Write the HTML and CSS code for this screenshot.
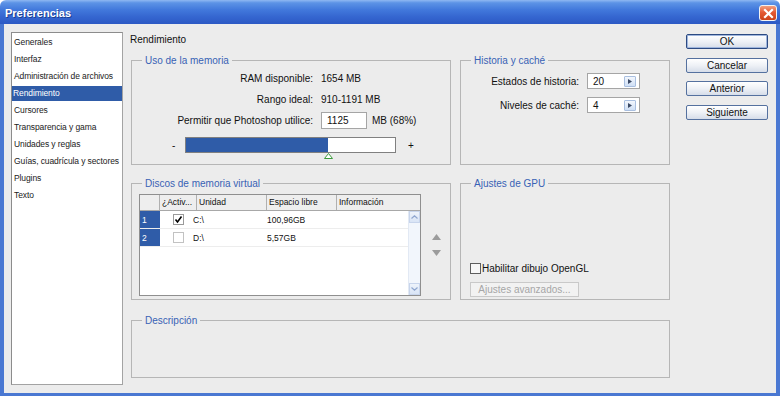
FILE: index.html
```html
<!DOCTYPE html>
<html lang="es">
<head>
    <meta charset="UTF-8">
    <title>Preferencias</title>
    <link rel="stylesheet" href="styles.css">
</head>
<body>
<div class="window">
    <div class="titlebar">
        <span class="title">Preferencias</span>
        <span class="close-btn">
            <svg width="11" height="11" viewBox="0 0 11 11"><path d="M2 2 L9 9 M9 2 L2 9" stroke="#fff" stroke-width="2.2" stroke-linecap="square"/></svg>
        </span>
    </div>

    <div class="dialog">
        <ul class="nav">
            <li>Generales</li>
            <li>Interfaz</li>
            <li>Administración de archivos</li>
            <li class="active">Rendimiento</li>
            <li>Cursores</li>
            <li>Transparencia y gama</li>
            <li>Unidades y reglas</li>
            <li>Guías, cuadrícula y sectores</li>
            <li>Plugins</li>
            <li>Texto</li>
        </ul>

        <div class="main">
            <div class="page-title">Rendimiento</div>

            <div class="row row-top">
                <fieldset class="group group-left">
                    <legend>Uso de la memoria</legend>
                    <div class="mem-grid">
                        <span class="lbl">RAM disponible:</span>
                        <span>1654 MB</span>
                        <span class="lbl">Rango ideal:</span>
                        <span>910-1191 MB</span>
                        <span class="lbl">Permitir que Photoshop utilice:</span>
                        <span class="inline">
                            <span class="field mem-field">1125</span>
                            <span>MB (68%)</span>
                        </span>
                    </div>
                    <div class="slider-row">
                        <span class="minus">-</span>
                        <div class="track">
                            <div class="fill" style="width: 142px"></div>
                            <svg class="thumb" width="9" height="6" viewBox="0 0 9 6"><polygon points="4.5,0.5 8.5,5.5 0.5,5.5" fill="#fff" stroke="#3c9a3c"/></svg>
                        </div>
                        <span class="plus">+</span>
                    </div>
                </fieldset>

                <fieldset class="group group-right">
                    <legend>Historia y caché</legend>
                    <div class="hist-grid">
                        <span class="lbl">Estados de historia:</span>
                        <span class="field spin">20<span class="spin-btn"><svg width="4" height="5" viewBox="0 0 4 5"><polygon points="0,0 4,2.5 0,5" fill="#3b4a66"/></svg></span></span>
                        <span class="lbl">Niveles de caché:</span>
                        <span class="field spin">4<span class="spin-btn"><svg width="4" height="5" viewBox="0 0 4 5"><polygon points="0,0 4,2.5 0,5" fill="#3b4a66"/></svg></span></span>
                    </div>
                </fieldset>
            </div>

            <div class="row row-mid">
                <fieldset class="group group-left">
                    <legend>Discos de memoria virtual</legend>
                    <div class="disks">
                        <div class="table">
                            <div class="thead">
                                <span class="th th-num"></span>
                                <span class="th th-act">¿Activ...</span>
                                <span class="th th-unit">Unidad</span>
                                <span class="th th-free">Espacio libre</span>
                                <span class="th th-info">Información</span>
                            </div>
                            <div class="tbody">
                                <div class="rows">
                                    <div class="tr">
                                        <span class="num">1</span>
                                        <span class="act"><span class="check checked"><svg width="9" height="9" viewBox="0 0 9 9"><path d="M1.5 4.5 L3.5 7 L7.5 1.5" fill="none" stroke="#000" stroke-width="1.6"/></svg></span></span>
                                        <span>C:\</span>
                                        <span class="free">100,96GB</span>
                                    </div>
                                    <div class="tr">
                                        <span class="num">2</span>
                                        <span class="act"><span class="check"></span></span>
                                        <span>D:\</span>
                                        <span class="free">5,57GB</span>
                                    </div>
                                </div>
                                <div class="scrollbar">
                                    <span class="sb-btn"><svg width="7" height="4" viewBox="0 0 7 4"><path d="M0.5 3.5 L3.5 0.8 L6.5 3.5" fill="none" stroke="#8fa6cf" stroke-width="1.2"/></svg></span>
                                    <span class="sb-btn"><svg width="7" height="4" viewBox="0 0 7 4"><path d="M0.5 0.5 L3.5 3.2 L6.5 0.5" fill="none" stroke="#8fa6cf" stroke-width="1.2"/></svg></span>
                                </div>
                            </div>
                        </div>
                        <div class="order">
                            <svg width="9" height="6" viewBox="0 0 9 6"><polygon points="4.5,0 9,6 0,6" fill="#9b9b9b"/></svg>
                            <svg width="9" height="6" viewBox="0 0 9 6"><polygon points="0,0 9,0 4.5,6" fill="#9b9b9b"/></svg>
                        </div>
                    </div>
                </fieldset>

                <fieldset class="group group-right">
                    <legend>Ajustes de GPU</legend>
                    <div class="gpu">
                        <label class="gpu-check"><span class="check dark"></span>Habilitar dibujo OpenGL</label>
                        <span class="btn-disabled">Ajustes avanzados...</span>
                    </div>
                </fieldset>
            </div>

            <fieldset class="group desc">
                <legend>Descripción</legend>
            </fieldset>
        </div>

        <div class="buttons">
            <span class="btn default">OK</span>
            <span class="btn">Cancelar</span>
            <span class="btn">Anterior</span>
            <span class="btn">Siguiente</span>
        </div>
    </div>
</div>
</body>
</html>
```

FILE: styles.css
```css
* {
    margin: 0;
    padding: 0;
    box-sizing: border-box;
}

html, body {
    width: 780px;
    height: 396px;
    overflow: hidden;
    background: #fff;
}

body {
    font-family: "Liberation Sans", Arial, sans-serif;
    font-size: 10px;
    color: #111;
}

.window {
    height: 396px;
    display: flex;
    flex-direction: column;
}

/* title bar */
.titlebar {
    height: 24px;
    display: flex;
    align-items: center;
    justify-content: space-between;
    padding: 0 3px 0 5px;
    border-radius: 6px 6px 0 0;
    background: linear-gradient(#8fb8f2 0%, #5c93e6 12%, #4279dc 40%, #3566d0 70%, #2c59c4 100%);
}

.title {
    margin-top: 2px;
    color: #fff;
    font-size: 11px;
    font-weight: bold;
    text-shadow: 1px 1px 0 #1b3f92;
}

.close-btn {
    width: 18px;
    height: 16px;
    margin-top: 2px;
    border: 1px solid #f3f3f3;
    border-radius: 3px;
    background: linear-gradient(#f0a080, #e55a34 45%, #cc4218);
    display: flex;
    align-items: center;
    justify-content: center;
}

/* dialog body */
.dialog {
    flex: 1;
    display: flex;
    background: #ececec;
    border: 4px solid #4a78d2;
    border-top: 0;
    border-bottom-width: 3px;
    padding: 8px 8px 8px 7px;
}

.nav {
    width: 112px;
    list-style: none;
    background: #fff;
    border: 1px solid #a3a3a3;
    border-top-color: #8c8c8c;
    border-left-color: #8c8c8c;
    padding-top: 2px;
    font-size: 8.5px;
    letter-spacing: -0.1px;
    color: #222;
}

.nav li {
    height: 15px;
    line-height: 15px;
    margin-bottom: 2px;
    padding-left: 2px;
    white-space: nowrap;
}

.nav li.active {
    background: #2f5ca8;
    color: #fff;
    padding-left: 1px;
}

.main {
    width: 539px;
    margin-left: 8px;
}

.page-title {
    line-height: 13px;
    margin: 1px 0 0 -1px;
}

.row {
    display: flex;
    gap: 9px;
}

.row-top {
    height: 111px;
    margin-top: 8px;
}

.row-mid {
    height: 123px;
    margin-top: 12px;
}

.group {
    border: 1px solid #b6b6b6;
    min-width: 0;
}

.group legend {
    margin-left: 10px;
    padding: 0 3px;
    line-height: 13px;
    color: #3862b5;
}

.group-left {
    width: 320px;
}

.group-right {
    width: 210px;
}

.desc {
    height: 64px;
    margin-top: 14px;
}

/* memory */
.mem-grid {
    display: grid;
    grid-template-columns: 181px auto;
    grid-template-rows: 20px 20px 21px;
    row-gap: 1px;
    column-gap: 8px;
    align-items: center;
    padding-top: 1px;
}

.lbl {
    text-align: right;
    white-space: nowrap;
}

.inline {
    display: flex;
    align-items: center;
    gap: 5px;
}

.field {
    display: inline-flex;
    align-items: center;
    background: #fff;
    border: 1px solid #a5a5a5;
    padding-left: 5px;
}

.mem-field {
    width: 46px;
    height: 17px;
}

.slider-row {
    display: flex;
    align-items: center;
    margin-top: 6px;
    padding-left: 40px;
}

.minus {
    width: 13px;
}

.plus {
    padding-left: 12px;
}

.track {
    position: relative;
    width: 211px;
    height: 16px;
    border: 1px solid #808080;
    background: #fff;
}

.fill {
    height: 100%;
    background: #2f5ca8;
}

.thumb {
    position: absolute;
    left: 138px;
    top: 15px;
}

/* history */
.hist-grid {
    display: grid;
    grid-template-columns: 118px 53px;
    grid-auto-rows: 16px;
    column-gap: 8px;
    row-gap: 8px;
    align-items: center;
    padding-top: 6px;
}

.spin {
    width: 53px;
    height: 16px;
    justify-content: space-between;
    padding-right: 3px;
}

.spin-btn {
    width: 12px;
    height: 11px;
    display: flex;
    align-items: center;
    justify-content: center;
    background: linear-gradient(#f3f7fd, #cfdff5);
    border: 1px solid #a9bfe0;
    border-radius: 1px;
}

/* virtual disks */
.disks {
    display: flex;
    padding: 4px 0 0 7px;
}

.table {
    width: 282px;
    height: 102px;
    border: 1px solid #8f8f8f;
    display: flex;
    flex-direction: column;
    font-size: 8.5px;
}

.thead {
    display: flex;
    height: 16px;
    border-bottom: 1px solid #a8a8a8;
    background: #eeeeee;
}

.th {
    line-height: 15px;
    padding-left: 2px;
    border-right: 1px solid #b0b0b0;
    white-space: nowrap;
}

.th-num { width: 20px; }
.th-act { width: 37px; }
.th-unit { width: 70px; }
.th-free { width: 70px; }
.th-info { flex: 1; border-right: 0; }

.tbody {
    flex: 1;
    display: flex;
}

.rows {
    flex: 1;
    background: #fff;
}

.tr {
    display: grid;
    grid-template-columns: 20px 33px 73px 1fr;
    align-items: center;
    height: 18px;
    border-bottom: 1px solid #ededed;
}

.num {
    height: 100%;
    display: flex;
    align-items: center;
    padding-left: 2px;
    background: #2f5ca8;
    color: #fff;
}

.act {
    display: flex;
    padding-left: 13px;
}

.free {
    padding-left: 1px;
}

.check {
    width: 11px;
    height: 11px;
    display: inline-flex;
    align-items: center;
    justify-content: center;
    border: 1px solid #c2c2c2;
    background: #fff;
}

.check.checked {
    border-color: #9a9a9a;
}

.check.dark {
    border-color: #5d5d5d;
    background: #f7f7f7;
}

.scrollbar {
    width: 12px;
    background: #f2f6fc;
    border-left: 1px solid #e2e9f4;
    display: flex;
    flex-direction: column;
    justify-content: space-between;
}

.sb-btn {
    height: 12px;
    display: flex;
    align-items: center;
    justify-content: center;
    background: linear-gradient(#eef3fb, #d9e4f6);
    border: 1px solid #c8d5ec;
}

.order {
    display: flex;
    flex-direction: column;
    gap: 10px;
    margin-left: 11px;
    padding-top: 40px;
}

/* gpu */
.gpu {
    display: flex;
    flex-direction: column;
    align-items: flex-start;
    padding-left: 9px;
}

.gpu-check {
    display: flex;
    align-items: center;
    gap: 1px;
    height: 11px;
    margin-top: 73px;
}

.btn-disabled {
    width: 109px;
    height: 15px;
    line-height: 13px;
    margin-top: 8px;
    text-align: center;
    color: #a6a6a6;
    background: #f2f2f2;
    border: 1px solid #c9c9c9;
}

/* right buttons */
.buttons {
    width: 82px;
    margin-left: 16px;
    padding-top: 2px;
    display: flex;
    flex-direction: column;
    gap: 8.5px;
}

.btn {
    height: 15px;
    line-height: 13px;
    text-align: center;
    border: 1px solid #55719f;
    border-radius: 2px;
    background: linear-gradient(#ffffff, #eef1f6 50%, #d6dde9);
}

.btn.default {
    border-color: #2c4a82;
    box-shadow: inset 0 0 0 1px #9fb6dd;
}
```
